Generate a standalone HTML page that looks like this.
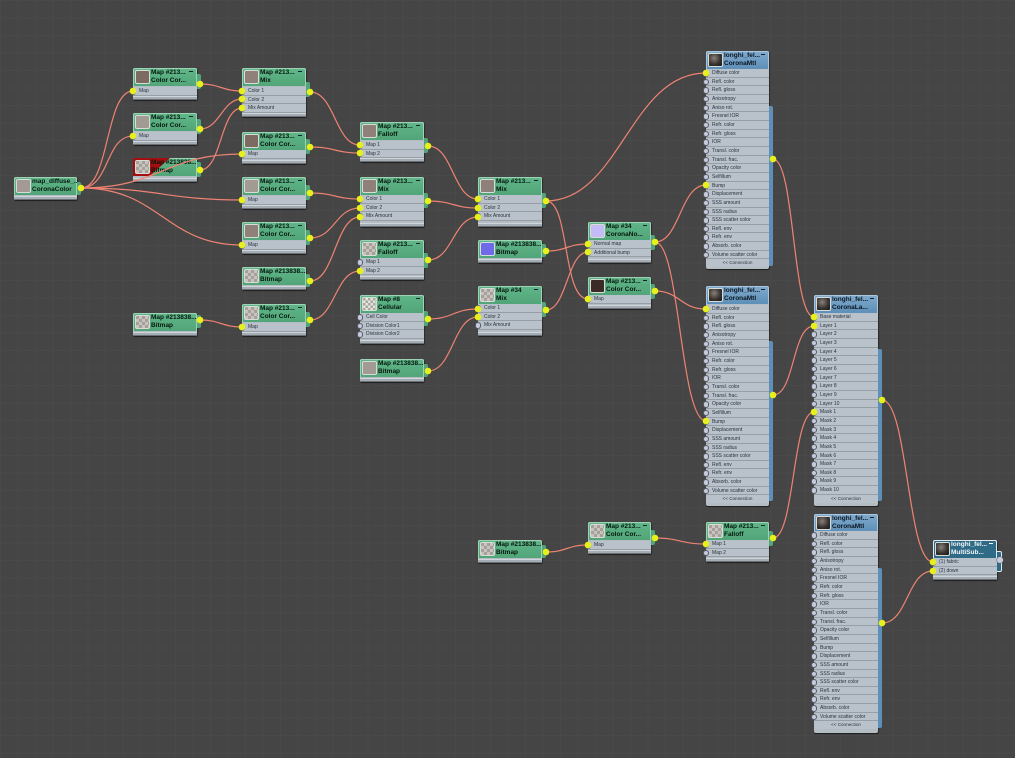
<!DOCTYPE html>
<html><head><meta charset="utf-8"><title>Node graph</title>
<style>
html,body{margin:0;padding:0;width:1015px;height:758px;overflow:hidden;background:#454545}
#w{position:absolute;left:0;top:0;width:1015px;height:758px;overflow:hidden;filter:blur(.35px)}
#bg{position:absolute;left:0;top:0;width:1015px;height:758px;background-color:#454545;
background-image:linear-gradient(#494949 1px,transparent 1px),linear-gradient(90deg,#494949 1px,transparent 1px);background-size:17.5px 17.5px}
.n{position:absolute;box-sizing:border-box;background:#b4bcc4;border-radius:2px;box-shadow:0 1px 0 #222,1px 1px 1px #2a2a2a;font-family:"Liberation Sans",sans-serif;color:#1c2430}
.h{position:absolute;left:0;top:0;right:0;height:18px;background:linear-gradient(#5fb688,#52a578);border:1px solid #9fd2b5;box-sizing:border-box;border-bottom:0;border-radius:2px 2px 0 0}
.bl .h{background:linear-gradient(#7fa9cc,#5d8fb8);border-color:#a9c6dc}
.dk .h{background:#2f6b86;border-color:#dfe9ee}
.th{position:absolute;left:2px;top:2px;width:15px;height:14px;border:1px solid #d8dcd8;box-sizing:border-box;border-radius:2px}
.t{position:absolute;left:18px;top:1.3px;font-size:6.5px;line-height:7.7px;font-weight:bold;color:#06170e;white-space:nowrap}
.bl .t{color:#0a1520}.dk .t{color:#f0f6f8}
.m{position:absolute;right:4px;top:3px;width:4px;height:1px;background:#123}
.rs{position:absolute;left:0;right:0;top:18px}
.r{height:8.67px;line-height:8px;font-size:5px;padding-left:6px;box-sizing:border-box;border-bottom:1px solid #969ea6;background:#b9c1ca;position:relative;white-space:nowrap;color:#2a323c}
.r:before{content:"";position:absolute;left:-3.3px;top:1px;width:6.5px;height:6.5px;border-radius:50%;background:#c5cbdb;border:.5px solid #555a66;box-sizing:border-box}
.c{height:8px;line-height:8px;font-size:4.6px;text-align:center;color:#2b333c;background:#b9c1ca}
.f{position:absolute;left:0;right:0;bottom:0;height:4px;background:#a5adb4;border-top:1px solid #cfd5da;box-sizing:border-box;border-bottom:1px solid #6a7076}
.tab{position:absolute;width:4px;background:#52a578;border-radius:0 2px 2px 0}
.bl .tab{background:#5d8fb8}.dk .tab{background:#2f6b86;border:1px solid #dfe9ee;border-left:0}
.a{background:#7d6a60}.b{background:#90807a}.c1{background:#a39a94}
.tx{background:repeating-conic-gradient(#c8c3bd 0 25%,#a6a09a 0 50%) 0 0/6px 6px}
.tw{background:repeating-conic-gradient(#e4e4de 0 25%,#a8a8a0 0 50%) 0 0/5px 5px}
.sp{background:radial-gradient(circle at 40% 35%,#8a8078,#3a3532 55%,#151515)}
svg{position:absolute;left:0;top:0}
</style></head><body><div id="w">
<div id="bg"></div>

<div class="n" style="left:14px;top:177px;width:63px;height:23px"><div class="h"></div><div class="th c1"></div><div class="t">map_diffuse_...<br>CoronaColor</div><div class="tab" style="left:63px;top:5px;height:13px"></div><div class="f"></div></div>

<div class="n" style="left:133px;top:68px;width:64px;height:32px"><div class="h"></div><div class="th a"></div><div class="t">Map #213...<br>Color Cor...</div><div class="m"></div><div class="tab" style="left:64px;top:6px;height:15px"></div><div class="rs" style="top:19px"><div class="r">Map</div></div><div class="f"></div></div>
<div class="n" style="left:133px;top:113px;width:64px;height:32px"><div class="h"></div><div class="th c1"></div><div class="t">Map #213...<br>Color Cor...</div><div class="m"></div><div class="tab" style="left:64px;top:6px;height:15px"></div><div class="rs" style="top:19px"><div class="r">Map</div></div><div class="f"></div></div>
<div class="n" style="left:133px;top:158px;width:64px;height:24px"><div class="h"></div><div style="position:absolute;left:0;top:0;width:37px;height:18px;background:#a30f10;clip-path:polygon(0 0,100% 0,45% 100%,0 100%)"></div><div class="th tx"></div><div class="t">Map #213838...<br>Bitmap</div><div class="tab" style="left:64px;top:4px;height:15px"></div><div class="f"></div></div>

<div class="n" style="left:242px;top:68px;width:64px;height:49px"><div class="h"></div><div class="th b"></div><div class="t">Map #213...<br>Mix</div><div class="m"></div><div class="tab" style="left:64px;top:14px;height:15px"></div><div class="rs" style="top:19px"><div class="r">Color 1</div><div class="r">Color 2</div><div class="r">Mix Amount</div></div><div class="f"></div></div>
<div class="n" style="left:242px;top:132px;width:64px;height:32px"><div class="h"></div><div class="th a"></div><div class="t">Map #213...<br>Color Cor...</div><div class="m"></div><div class="tab" style="left:64px;top:7px;height:15px"></div><div class="rs" style="top:18px"><div class="r">Map</div></div><div class="f"></div></div>
<div class="n" style="left:242px;top:177px;width:64px;height:32px"><div class="h"></div><div class="th c1"></div><div class="t">Map #213...<br>Color Cor...</div><div class="m"></div><div class="tab" style="left:64px;top:8px;height:15px"></div><div class="rs" style="top:19px"><div class="r">Map</div></div><div class="f"></div></div>
<div class="n" style="left:242px;top:222px;width:64px;height:32px"><div class="h"></div><div class="th b"></div><div class="t">Map #213...<br>Color Cor...</div><div class="m"></div><div class="tab" style="left:64px;top:8px;height:15px"></div><div class="rs" style="top:19px"><div class="r">Map</div></div><div class="f"></div></div>
<div class="n" style="left:242px;top:267px;width:64px;height:23px"><div class="h"></div><div class="th tx"></div><div class="t">Map #213838...<br>Bitmap</div><div class="tab" style="left:64px;top:7px;height:13px"></div><div class="f"></div></div>
<div class="n" style="left:133px;top:313px;width:64px;height:23px"><div class="h"></div><div class="th tx"></div><div class="t">Map #213838...<br>Bitmap</div><div class="tab" style="left:64px;top:2px;height:13px"></div><div class="f"></div></div>
<div class="n" style="left:242px;top:304px;width:64px;height:32px"><div class="h"></div><div class="th tx"></div><div class="t">Map #213...<br>Color Cor...</div><div class="m"></div><div class="tab" style="left:64px;top:8px;height:15px"></div><div class="rs" style="top:19px"><div class="r">Map</div></div><div class="f"></div></div>

<div class="n" style="left:360px;top:122px;width:64px;height:40px"><div class="h"></div><div class="th b"></div><div class="t">Map #213...<br>Falloff</div><div class="m"></div><div class="tab" style="left:64px;top:16px;height:15px"></div><div class="rs" style="top:19px"><div class="r">Map 1</div><div class="r">Map 2</div></div><div class="f"></div></div>
<div class="n" style="left:360px;top:177px;width:64px;height:50px"><div class="h"></div><div class="th b"></div><div class="t">Map #213...<br>Mix</div><div class="m"></div><div class="tab" style="left:64px;top:16px;height:15px"></div><div class="rs" style="top:18px"><div class="r">Color 1</div><div class="r">Color 2</div><div class="r">Mix Amount</div></div><div class="f"></div></div>
<div class="n" style="left:360px;top:240px;width:64px;height:40px"><div class="h"></div><div class="th tx"></div><div class="t">Map #213...<br>Falloff</div><div class="m"></div><div class="tab" style="left:64px;top:13px;height:15px"></div><div class="rs" style="top:18px"><div class="r">Map 1</div><div class="r">Map 2</div></div><div class="f"></div></div>
<div class="n" style="left:360px;top:295px;width:64px;height:49px"><div class="h"></div><div class="th tw"></div><div class="t">Map #8<br>Cellular</div><div class="m"></div><div class="tab" style="left:64px;top:16px;height:15px"></div><div class="rs" style="top:18px"><div class="r">Cell Color</div><div class="r">Division Color1</div><div class="r">Division Color2</div></div><div class="f"></div></div>
<div class="n" style="left:360px;top:359px;width:64px;height:23px"><div class="h"></div><div class="th c1"></div><div class="t">Map #213838...<br>Bitmap</div><div class="tab" style="left:64px;top:5px;height:13px"></div><div class="f"></div></div>

<div class="n" style="left:478px;top:177px;width:64px;height:50px"><div class="h"></div><div class="th b"></div><div class="t">Map #213...<br>Mix</div><div class="m"></div><div class="tab" style="left:64px;top:16px;height:15px"></div><div class="rs" style="top:18px"><div class="r">Color 1</div><div class="r">Color 2</div><div class="r">Mix Amount</div></div><div class="f"></div></div>
<div class="n" style="left:478px;top:240px;width:64px;height:23px"><div class="h"></div><div class="th" style="background:#6f6be8"></div><div class="t">Map #213838...<br>Bitmap</div><div class="tab" style="left:64px;top:4px;height:13px"></div><div class="f"></div></div>
<div class="n" style="left:478px;top:286px;width:64px;height:50px"><div class="h"></div><div class="th tx"></div><div class="t">Map #34<br>Mix</div><div class="m"></div><div class="tab" style="left:64px;top:16px;height:15px"></div><div class="rs" style="top:18px"><div class="r">Color 1</div><div class="r">Color 2</div><div class="r">Mix Amount</div></div><div class="f"></div></div>
<div class="n" style="left:478px;top:540px;width:64px;height:23px"><div class="h"></div><div class="th tx"></div><div class="t">Map #213838...<br>Bitmap</div><div class="tab" style="left:64px;top:5px;height:13px"></div><div class="f"></div></div>

<div class="n" style="left:588px;top:222px;width:63px;height:41px"><div class="h"></div><div class="th" style="background:#c4bcf6"></div><div class="t">Map #34<br>CoronaNo...</div><div class="m"></div><div class="tab" style="left:63px;top:13px;height:15px"></div><div class="rs" style="top:18px"><div class="r">Normal map</div><div class="r">Additional bump</div></div><div class="f"></div></div>
<div class="n" style="left:588px;top:277px;width:63px;height:32px"><div class="h"></div><div class="th" style="background:#3b2a26"></div><div class="t">Map #213...<br>Color Cor...</div><div class="m"></div><div class="tab" style="left:63px;top:7px;height:15px"></div><div class="rs" style="top:18px"><div class="r">Map</div></div><div class="f"></div></div>
<div class="n" style="left:588px;top:522px;width:63px;height:32px"><div class="h"></div><div class="th tx"></div><div class="t">Map #213...<br>Color Cor...</div><div class="m"></div><div class="tab" style="left:63px;top:8px;height:15px"></div><div class="rs" style="top:19px"><div class="r">Map</div></div><div class="f"></div></div>
<div class="n" style="left:706px;top:522px;width:63px;height:40px"><div class="h"></div><div class="th tx"></div><div class="t">Map #213...<br>Falloff</div><div class="m"></div><div class="tab" style="left:63px;top:9px;height:15px"></div><div class="rs" style="top:18px"><div class="r">Map 1</div><div class="r">Map 2</div></div><div class="f"></div></div>

<div class="n bl" style="left:706px;top:51px;width:63px;height:218px"><div class="h"></div><div class="th sp"></div><div class="t">longhi_fel...<br>CoronaMtl</div><div class="m"></div><div class="tab" style="left:63px;top:55px;height:160px"></div><div class="rs"><div class="r">Diffuse color</div><div class="r">Refl. color</div><div class="r">Refl. gloss</div><div class="r">Anisotropy</div><div class="r">Aniso rot.</div><div class="r">Fresnel IOR</div><div class="r">Refr. color</div><div class="r">Refr. gloss</div><div class="r">IOR</div><div class="r">Transl. color</div><div class="r">Transl. frac.</div><div class="r">Opacity color</div><div class="r">Selfillum</div><div class="r">Bump</div><div class="r">Displacement</div><div class="r">SSS amount</div><div class="r">SSS radius</div><div class="r">SSS scatter color</div><div class="r">Refl. env</div><div class="r">Refr. env</div><div class="r">Absorb. color</div><div class="r">Volume scatter color</div><div class="c">&lt;&lt; Connection</div></div></div>
<div class="n bl" style="left:706px;top:286px;width:63px;height:220px"><div class="h"></div><div class="th sp"></div><div class="t">longhi_fel...<br>CoronaMtl</div><div class="m"></div><div class="tab" style="left:63px;top:55px;height:160px"></div><div class="rs" style="top:19px"><div class="r">Diffuse color</div><div class="r">Refl. color</div><div class="r">Refl. gloss</div><div class="r">Anisotropy</div><div class="r">Aniso rot.</div><div class="r">Fresnel IOR</div><div class="r">Refr. color</div><div class="r">Refr. gloss</div><div class="r">IOR</div><div class="r">Transl. color</div><div class="r">Transl. frac.</div><div class="r">Opacity color</div><div class="r">Selfillum</div><div class="r">Bump</div><div class="r">Displacement</div><div class="r">SSS amount</div><div class="r">SSS radius</div><div class="r">SSS scatter color</div><div class="r">Refl. env</div><div class="r">Refr. env</div><div class="r">Absorb. color</div><div class="r">Volume scatter color</div><div class="c">&lt;&lt; Connection</div></div></div>
<div class="n bl" style="left:814px;top:295px;width:64px;height:211px"><div class="h"></div><div class="th sp"></div><div class="t">longhi_fel...<br>CoronaLa...</div><div class="m"></div><div class="tab" style="left:64px;top:54px;height:152px"></div><div class="rs"><div class="r">Base material</div><div class="r">Layer 1</div><div class="r">Layer 2</div><div class="r">Layer 3</div><div class="r">Layer 4</div><div class="r">Layer 5</div><div class="r">Layer 6</div><div class="r">Layer 7</div><div class="r">Layer 8</div><div class="r">Layer 9</div><div class="r">Layer 10</div><div class="r">Mask 1</div><div class="r">Mask 2</div><div class="r">Mask 3</div><div class="r">Mask 4</div><div class="r">Mask 5</div><div class="r">Mask 6</div><div class="r">Mask 7</div><div class="r">Mask 8</div><div class="r">Mask 9</div><div class="r">Mask 10</div><div class="c">&lt;&lt; Connection</div></div></div>
<div class="n bl" style="left:814px;top:514px;width:64px;height:219px"><div class="h"></div><div class="th sp"></div><div class="t">longhi_fel...<br>CoronaMtl</div><div class="m"></div><div class="tab" style="left:64px;top:54px;height:160px"></div><div class="rs" style="top:17px"><div class="r">Diffuse color</div><div class="r">Refl. color</div><div class="r">Refl. gloss</div><div class="r">Anisotropy</div><div class="r">Aniso rot.</div><div class="r">Fresnel IOR</div><div class="r">Refr. color</div><div class="r">Refr. gloss</div><div class="r">IOR</div><div class="r">Transl. color</div><div class="r">Transl. frac.</div><div class="r">Opacity color</div><div class="r">Selfillum</div><div class="r">Bump</div><div class="r">Displacement</div><div class="r">SSS amount</div><div class="r">SSS radius</div><div class="r">SSS scatter color</div><div class="r">Refl. env</div><div class="r">Refr. env</div><div class="r">Absorb. color</div><div class="r">Volume scatter color</div><div class="c">&lt;&lt; Connection</div></div></div>
<div class="n dk" style="left:933px;top:540px;width:64px;height:40px"><div class="h"></div><div class="th sp"></div><div class="t">longhi_fel...<br>MultiSub...</div><div class="m" style="background:#fff"></div><div class="tab" style="left:64px;top:11px;height:19px"></div><div class="rs"><div class="r">(1) fabric</div><div class="r">(2) down</div></div><div class="f"></div></div>

<svg width="1015" height="758" viewBox="0 0 1015 758">
<g fill="none" stroke="#ee8373" stroke-width="1.2">
<path d="M81 188C110 188 105 91 133 91"/><path d="M81 188C110 188 105 136 133 136"/><path d="M81 188C160 188 165 154 242 154"/><path d="M81 188C160 188 165 200 242 200"/><path d="M81 188C160 188 165 245 242 245"/>
<path d="M200 84C220 84 222 91 242 91"/><path d="M200 129C220 129 222 99 242 99"/><path d="M200 170C222 170 220 108 242 108"/>
<path d="M310 92C335 92 335 145 360 145"/><path d="M310 147C335 147 335 153 360 153"/><path d="M310 193C335 193 335 199 360 199"/><path d="M310 238C335 238 335 208 360 208"/><path d="M310 281C335 281 335 217 360 217"/><path d="M200 320C220 320 222 327 242 327"/><path d="M310 320C335 320 335 271 360 271"/>
<path d="M428 146C453 146 453 199 478 199"/><path d="M428 201C453 201 453 208 478 208"/><path d="M428 260C453 260 453 217 478 217"/><path d="M428 319C453 319 453 309 478 309"/><path d="M428 371C453 371 453 317 478 317"/>
<path d="M546 201C620 201 630 73 706 73"/><path d="M546 201C570 201 562 299 588 299"/><path d="M546 251C567 251 567 244 588 244"/><path d="M546 310C567 310 567 252 588 252"/>
<path d="M655 242C680 242 680 185 706 185"/><path d="M655 242C680 242 680 421 706 421"/><path d="M655 291C680 291 680 309 706 309"/>
<path d="M546 552C567 552 567 545 588 545"/><path d="M655 538C680 538 680 544 706 544"/><path d="M773 538C795 538 792 412 814 412"/>
<path d="M773 159C795 159 792 317 814 317"/><path d="M773 395C795 395 792 326 814 326"/><path d="M882 400C908 400 907 562 933 562"/><path d="M882 623C908 623 907 571 933 571"/>
</g>
<g fill="#e6f01c">
<circle cx="81" cy="188" r="3.3"/><circle cx="133" cy="91" r="3.3"/><circle cx="133" cy="136" r="3.3"/><circle cx="200" cy="84" r="3.3"/><circle cx="200" cy="129" r="3.3"/><circle cx="200" cy="170" r="3.3"/><circle cx="200" cy="320" r="3.3"/>
<circle cx="242" cy="91" r="3.3"/><circle cx="242" cy="99" r="3.3"/><circle cx="242" cy="108" r="3.3"/><circle cx="242" cy="154" r="3.3"/><circle cx="242" cy="200" r="3.3"/><circle cx="242" cy="245" r="3.3"/><circle cx="242" cy="327" r="3.3"/>
<circle cx="310" cy="92" r="3.3"/><circle cx="310" cy="147" r="3.3"/><circle cx="310" cy="193" r="3.3"/><circle cx="310" cy="238" r="3.3"/><circle cx="310" cy="281" r="3.3"/><circle cx="310" cy="320" r="3.3"/>
<circle cx="360" cy="145" r="3.3"/><circle cx="360" cy="153" r="3.3"/><circle cx="360" cy="199" r="3.3"/><circle cx="360" cy="208" r="3.3"/><circle cx="360" cy="217" r="3.3"/><circle cx="360" cy="271" r="3.3"/>
<circle cx="428" cy="146" r="3.3"/><circle cx="428" cy="201" r="3.3"/><circle cx="428" cy="260" r="3.3"/><circle cx="428" cy="319" r="3.3"/><circle cx="428" cy="371" r="3.3"/>
<circle cx="478" cy="199" r="3.3"/><circle cx="478" cy="208" r="3.3"/><circle cx="478" cy="217" r="3.3"/><circle cx="478" cy="309" r="3.3"/><circle cx="478" cy="317" r="3.3"/>
<circle cx="546" cy="201" r="3.3"/><circle cx="546" cy="251" r="3.3"/><circle cx="546" cy="310" r="3.3"/><circle cx="546" cy="552" r="3.3"/>
<circle cx="588" cy="244" r="3.3"/><circle cx="588" cy="252" r="3.3"/><circle cx="588" cy="299" r="3.3"/><circle cx="588" cy="545" r="3.3"/>
<circle cx="655" cy="242" r="3.3"/><circle cx="655" cy="291" r="3.3"/><circle cx="655" cy="538" r="3.3"/>
<circle cx="706" cy="73" r="3.3"/><circle cx="706" cy="185" r="3.3"/><circle cx="706" cy="309" r="3.3"/><circle cx="706" cy="421" r="3.3"/><circle cx="706" cy="544" r="3.3"/>
<circle cx="773" cy="159" r="3.3"/><circle cx="773" cy="395" r="3.3"/><circle cx="773" cy="538" r="3.3"/>
<circle cx="814" cy="317" r="3.3"/><circle cx="814" cy="326" r="3.3"/><circle cx="814" cy="412" r="3.3"/>
<circle cx="882" cy="400" r="3.3"/><circle cx="882" cy="623" r="3.3"/><circle cx="933" cy="562" r="3.3"/><circle cx="933" cy="571" r="3.3"/>
</g>
<circle cx="1000" cy="560" r="3.3" fill="#c5cbdb" stroke="#555a66" stroke-width=".5"/>
</svg>
</div></body></html>
